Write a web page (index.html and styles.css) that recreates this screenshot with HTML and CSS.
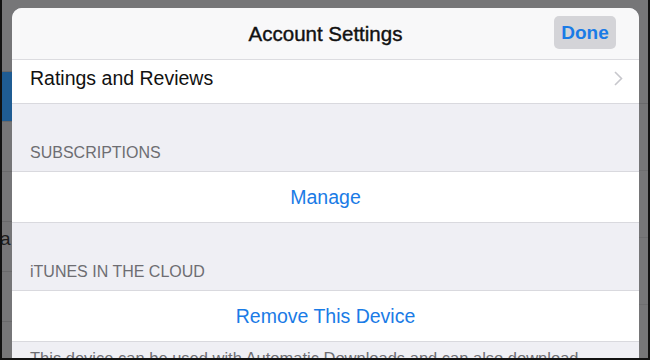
FILE: index.html
```html
<!DOCTYPE html>
<html>
<head>
  <title>Account Settings</title>
  <link rel="stylesheet" href="styles.css">
</head>
<body>
  <div class="screen">
    <!-- dimmed page behind the sheet -->
    <div class="side side-left">
      <div class="band band-top"></div>
      <div class="band band-blue"></div>
      <div class="band band-row"></div>
      <div class="band band-row"></div>
      <div class="band band-text">a</div>
      <div class="band band-row"></div>
      <div class="band band-rest"></div>
    </div>

    <div class="sheet">
      <header class="sheet-head">
        <h1>Account Settings</h1>
        <button class="done-btn">Done</button>
      </header>

      <div class="cell cell-link">
        <span>Ratings and Reviews</span>
        <svg class="chevron" width="9" height="15" viewBox="0 0 9 15">
          <path d="M1 1 L7.5 7.5 L1 14" fill="none" stroke="#c7c7cc" stroke-width="1.6"/>
        </svg>
      </div>

      <div class="group-title">SUBSCRIPTIONS</div>
      <div class="cell cell-action">Manage</div>

      <div class="group-title">iTUNES IN THE CLOUD</div>
      <div class="cell cell-action">Remove This Device</div>

      <p class="group-foot">This device can be used with Automatic Downloads and can also download previously purchased music, apps, and books.</p>
    </div>

    <div class="side side-right">
      <div class="band band-top"></div>
      <div class="band band-row"></div>
      <div class="band band-row"></div>
      <div class="band band-row"></div>
      <div class="band band-rest"></div>
    </div>
  </div>
</body>
</html>
```

FILE: styles.css
```css
body {
  margin: 0;
  padding: 0;
  font-family: "Liberation Sans", Arial, sans-serif;
  background: #000;
}

.screen {
  width: 650px;
  height: 360px;
  box-sizing: border-box;
  border: 2px solid #111;
  border-top: none;
  background-color: #767678;
  display: flex;
  overflow: hidden;
}

.side {
  width: 10px;
  flex-shrink: 0;
  display: flex;
  flex-direction: column;
}

.side-right {
  width: 9px;
}

.band {
  border-bottom: 1px solid #69696b;
  box-sizing: border-box;
}

.band-top {
  height: 72px;
}

.band-blue {
  height: 50px;
  background-color: #1f5c93;
}

.band-row {
  height: 50px;
}

.band-text {
  height: 50px;
  color: #1c1c1c;
  font-size: 19px;
  line-height: 26px;
  padding-top: 4px;
  text-indent: -2px;
}

.band-rest {
  flex: 1;
  border-bottom: none;
}

.side-right .band-top {
  height: 104px;
}

.side-right .band-row {
  height: 67px;
  border-bottom-color: #6d6d6f;
}

.sheet {
  flex: 1;
  margin-top: 8px;
  background-color: #efeff4;
  border-radius: 10px 10px 0 0;
  overflow: hidden;
  display: flex;
  flex-direction: column;
}

.sheet-head {
  height: 51px;
  flex-shrink: 0;
  background-color: #f8f8f9;
  border-bottom: 1px solid #dcdce0;
  display: flex;
  align-items: center;
  justify-content: center;
  position: relative;
}

.sheet-head h1 {
  margin: 0;
  font-size: 20.5px;
  font-weight: normal;
  color: #111;
  -webkit-text-stroke: 0.4px #111;
}

.done-btn {
  position: absolute;
  right: 23px;
  top: 8px;
  width: 62px;
  height: 33px;
  border: none;
  border-radius: 5px;
  background-color: #d4d4d8;
  color: #1a7be6;
  font-family: inherit;
  font-size: 19px;
  font-weight: bold;
  padding: 0;
}

.cell {
  background-color: #fff;
  height: 52px;
  flex-shrink: 0;
  box-sizing: border-box;
  border-bottom: 1px solid #d9d9de;
  display: flex;
  align-items: center;
  font-size: 19.5px;
}

.cell-link {
  height: 44px;
  padding: 0 16px 6px 18px;
  justify-content: space-between;
  color: #111;
}

.cell-action {
  justify-content: center;
  color: #1a7be6;
  border-top: 1px solid #d9d9de;
}

.group-title {
  height: 67px;
  flex-shrink: 0;
  box-sizing: border-box;
  padding: 0 0 9px 18px;
  display: flex;
  align-items: flex-end;
  font-size: 16px;
  color: #6d6d72;
}

.group-foot {
  margin: 0;
  padding: 6px 18px 0;
  font-size: 16.5px;
  line-height: 20px;
  color: #6d6d72;
}
```
